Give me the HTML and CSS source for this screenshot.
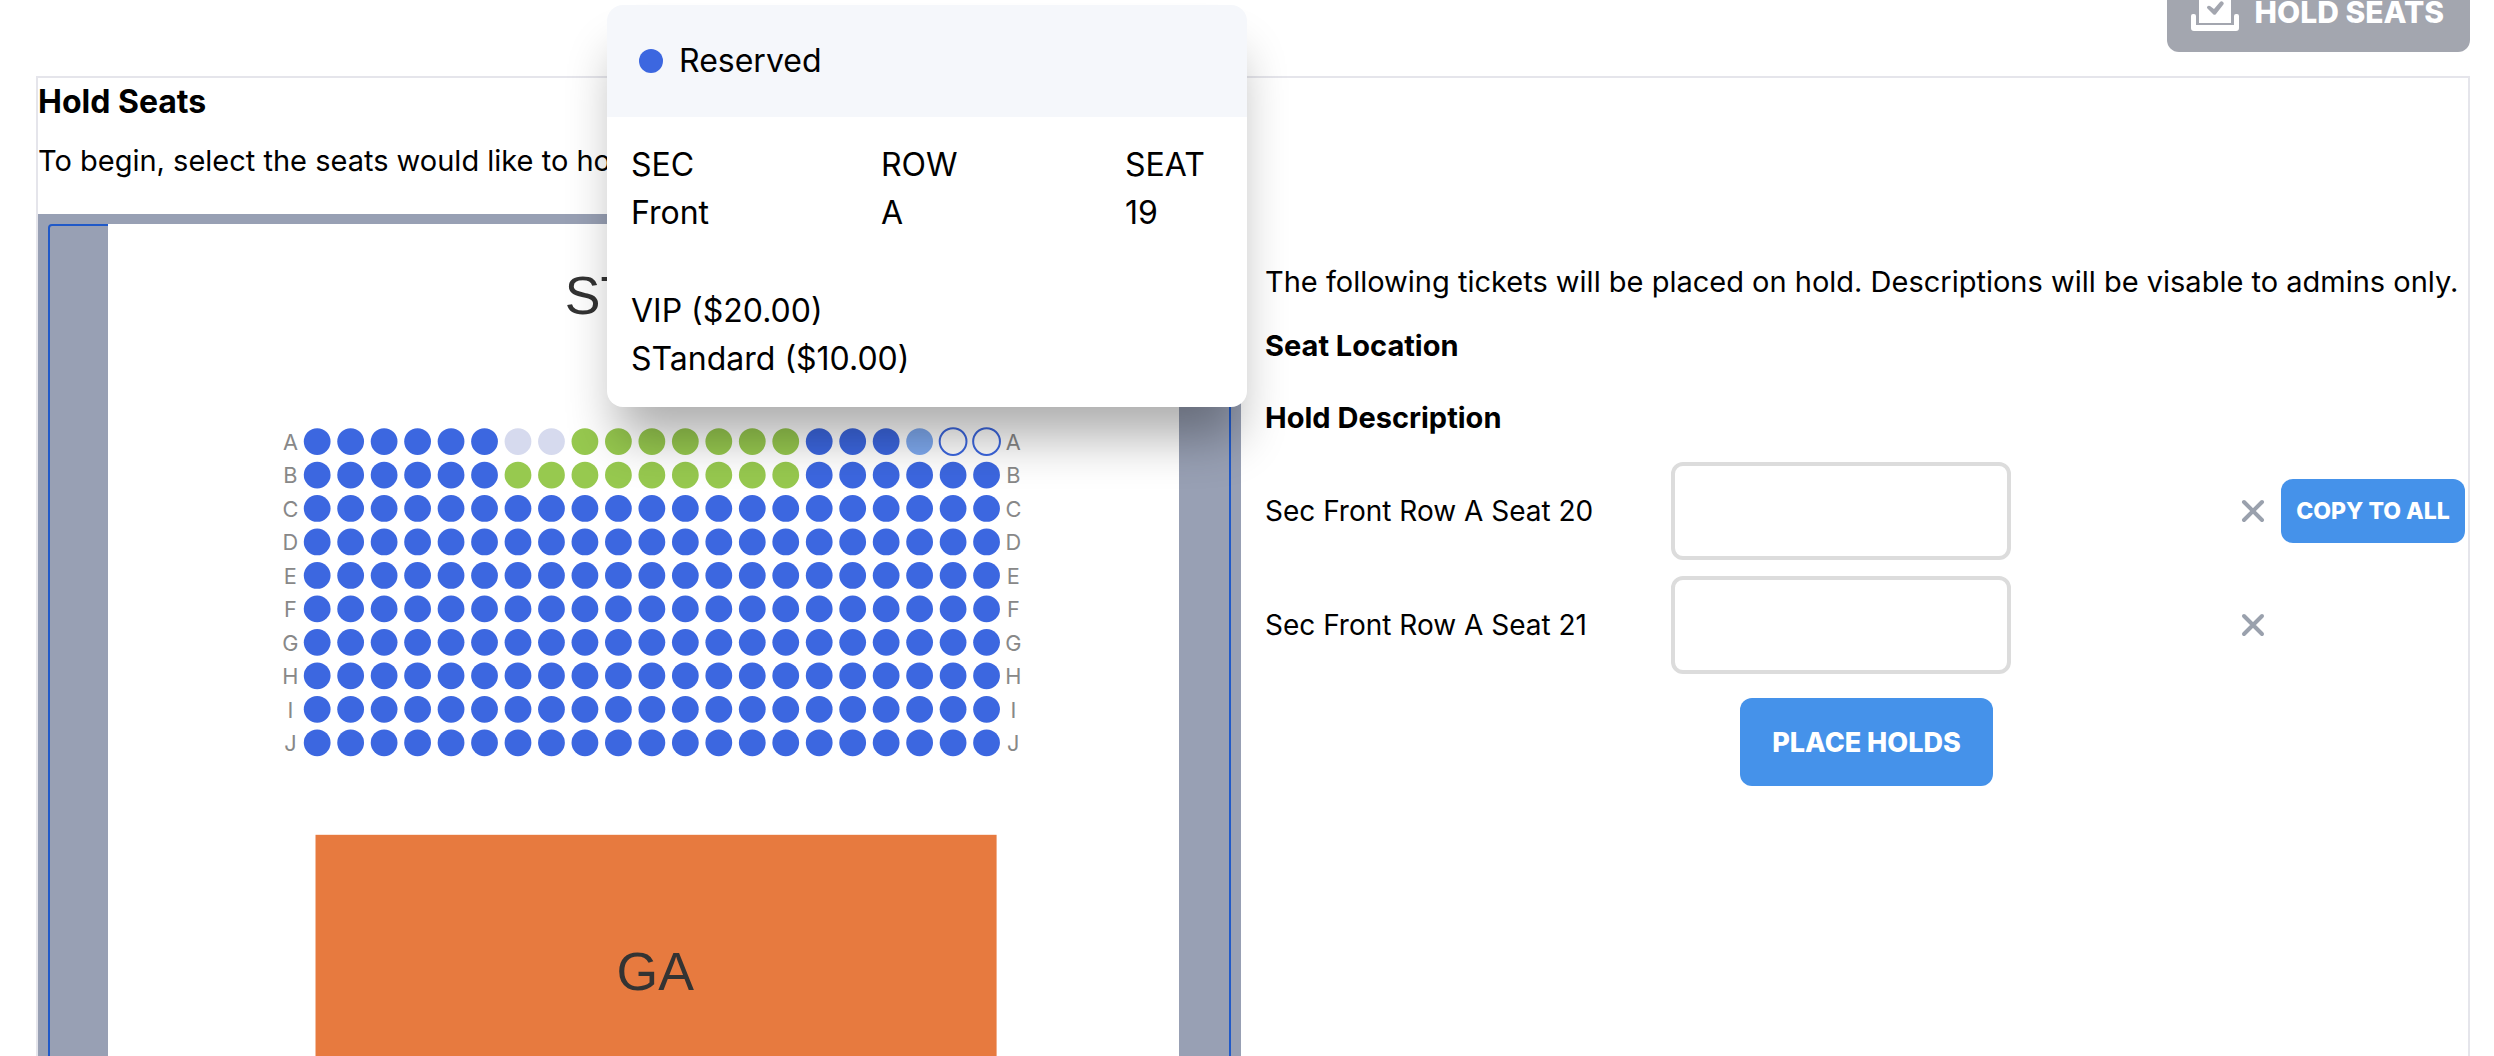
FILE: index.html
```html
<!DOCTYPE html>
<html lang="en">
    <head>
        <meta charset="utf-8">
        <title>Hold Seats</title>
        <link rel="stylesheet" href="styles.css">
    </head>
    <body>
        <div class="toolbar">
            <button type="button" class="btn btn-hold">
                <svg class="ballot-icon" viewBox="0 0 48 38" aria-hidden="true">
                    <path fill="currentColor" fill-rule="evenodd" d="M10 0h28a2 2 0 0 1 2 2v28H8V2a2 2 0 0 1 2-2zM16 15l6 6a2 2 0 0 0 3 0l7-9a2 2 0 0 0-3-3l-6 7-4-3a2 2 0 0 0-3 2z"/>
                    <path fill="currentColor" d="M2 21h1a2 2 0 0 1 2 2v9h38v-9a2 2 0 0 1 2-2h1a2 2 0 0 1 2 2v12a3 3 0 0 1-3 3H3a3 3 0 0 1-3-3V23a2 2 0 0 1 2-2z"/>
                </svg>
                HOLD SEATS
            </button>
        </div>

        <div class="panel">
            <h2 class="title">Hold Seats</h2>
            <p class="intro">To begin, select the seats would like to hold.</p>

            <div class="columns">
                <div class="map-frame">
                    <div class="map-outline">
                        <svg class="seat-map" viewBox="0 0 640 600">
                            <rect class="floor" width="640" height="600"/>
                            <text class="area-name" x="326" y="54">STAGE</text>
                            <g id="seats"></g>
                            <rect class="ga" x="124" y="365" width="407" height="200"/>
                            <text class="area-name" x="327" y="458">GA</text>
                        </svg>
                    </div>
                </div>

                <form class="holds">
                    <p class="note">The following tickets will be placed on hold. Descriptions will be visable to admins only.</p>
                    <h3 class="heading">Seat Location</h3>
                    <h3 class="heading heading-last">Hold Description</h3>

                    <div class="hold-row">
                        <label for="seat-20">Sec Front Row A Seat 20</label>
                        <input type="text" class="hold-input" id="seat-20">
                        <div class="actions">
                            <button type="button" class="remove" aria-label="Remove seat 20">
                                <svg viewBox="0 0 24 24"><path d="M3 3l18 18M21 3L3 21"/></svg>
                            </button>
                            <button type="button" class="btn btn-copy">COPY TO ALL</button>
                        </div>
                    </div>
                    <div class="hold-row">
                        <label for="seat-21">Sec Front Row A Seat 21</label>
                        <input type="text" class="hold-input" id="seat-21">
                        <div class="actions">
                            <button type="button" class="remove" aria-label="Remove seat 21">
                                <svg viewBox="0 0 24 24"><path d="M3 3l18 18M21 3L3 21"/></svg>
                            </button>
                        </div>
                    </div>

                    <button type="button" class="btn btn-place">PLACE HOLDS</button>
                </form>
            </div>
        </div>

        <div class="tooltip" role="tooltip">
            <div class="tooltip-header"><span class="dot"></span>Reserved</div>
            <div class="tooltip-body">
                <table class="seat-info">
                    <tr><th>SEC</th><th>ROW</th><th>SEAT</th></tr>
                    <tr><td>Front</td><td>A</td><td>19</td></tr>
                </table>
                <div>VIP ($20.00)</div>
                <div>STandard ($10.00)</div>
            </div>
        </div>

        <script>
            // r = reserved, u = unavailable, g = vip, h = hovered, s = selected
            const full = "r".repeat(21);
            const rows = {
                A: "rrrrrruugggggggrrrhss",
                B: "rrrrrrgggggggggrrrrrr",
                C: full, D: full, E: full, F: full,
                G: full, H: full, I: full, J: full
            };

            let svg = "";
            Object.keys(rows).forEach((name, i) => {
                const y = 130 + i * 20;
                svg += `<text class="row-name" x="109" y="${y + 5}">${name}</text>`;
                rows[name].split("").forEach((type, j) => {
                    svg += `<circle class="seat ${type}" cx="${125 + j * 20}" cy="${y}" r="8"/>`;
                });
                svg += `<text class="row-name" x="541" y="${y + 5}">${name}</text>`;
            });
            document.getElementById("seats").innerHTML = svg;
        </script>
    </body>
</html>
```
FILE: styles.css
```css
* {
    box-sizing: border-box;
}

body {
    margin: 0;
    padding: 0 24px 0 36px;
    height: 100vh;
    overflow: hidden;
    font-family: Inter, "Open Sans", sans-serif;
    font-size: 28px;
    line-height: 42px;
    color: black;
    background-color: white;
}

h2, h3, p {
    margin: 0;
}

/* the bar is partly scrolled out of view */
.toolbar {
    display: flex;
    justify-content: flex-end;
    margin-top: -28px;
    margin-bottom: 24px;
}

.btn {
    border: none;
    border-radius: 12px;
    color: white;
    background-color: #4592ea;
    font-family: inherit;
    font-weight: 800;
    cursor: pointer;
}

.btn-hold {
    display: flex;
    align-items: center;
    gap: 16px;
    height: 80px;
    padding: 0 26px 0 24px;
    font-size: 30px;
    background-color: #a3a6af;
}

.ballot-icon {
    width: 48px;
}

.panel {
    border: 2px solid #e5e5eb;
}

.title {
    font-size: 32px;
    line-height: 48px;
}

.intro {
    margin-top: 14px;
    margin-bottom: 32px;
    font-size: 29px;
}

.columns {
    display: grid;
    grid-template-columns: minmax(0, 1fr) minmax(0, 1fr);
    gap: 24px;
}

.map-frame {
    padding: 10px;
    background-color: #98a0b4;
}

.map-outline {
    padding: 0 50px 0 58px;
    border: 2px solid #2059c8;
    border-radius: 4px;
}

.seat-map {
    display: block;
    width: 100%;
    margin-top: -2px;
}

.floor {
    fill: white;
}

.ga {
    fill: #e77a3f;
}

.area-name {
    font-family: "Liberation Sans", Arial, sans-serif;
    font-size: 32px;
    text-anchor: middle;
    fill: #333;
}

.row-name {
    font-size: 13px;
    text-anchor: middle;
    fill: #888;
}

.r { fill: #3c67e0; }
.u { fill: #d6daee; }
.g { fill: #97c94f; }
.h { fill: #7faaf0; }

.s {
    fill: none;
    stroke: #3c67e0;
    stroke-width: 2px;
    vector-effect: non-scaling-stroke;
}

.holds {
    display: flex;
    flex-direction: column;
    padding-top: 47px;
}

.note {
    font-size: 29px;
    white-space: nowrap;
}

.heading {
    margin-top: 22px;
    font-size: 29px;
}

.heading-last {
    margin-top: 30px;
    margin-bottom: 23px;
}

.hold-row {
    display: grid;
    grid-template-columns: 406px 340px 1fr;
    align-items: center;
    margin-bottom: 16px;
}

.hold-input {
    height: 98px;
    padding: 0 16px;
    border: 4px solid #dcdcdc;
    border-radius: 12px;
    font: inherit;
}

.actions {
    display: grid;
    grid-template-columns: 24px 184px;
    justify-content: end;
    align-items: center;
    gap: 16px;
    padding-right: 3px;
}

.remove {
    display: flex;
    padding: 0;
    border: none;
    background: none;
    cursor: pointer;
}

.remove svg {
    width: 24px;
    stroke: #9aa1ad;
    stroke-width: 4px;
    stroke-linecap: round;
}

.btn-copy {
    height: 64px;
    padding: 0;
    font-size: 23px;
}

.btn-place {
    align-self: center;
    height: 88px;
    margin-top: 8px;
    padding: 0 32px;
    font-size: 27px;
}

.tooltip {
    position: absolute;
    top: 5px;
    left: 607px;
    width: 640px;
    border-radius: 16px;
    overflow: hidden;
    font-size: 32px;
    line-height: 48px;
    background-color: white;
    box-shadow: 0 40px 50px -10px rgba(0, 0, 0, 0.32);
}

.tooltip-header {
    display: flex;
    align-items: center;
    gap: 16px;
    height: 112px;
    padding: 0 32px;
    background-color: #f5f7fb;
}

.dot {
    width: 24px;
    height: 24px;
    border-radius: 50%;
    background-color: #3c67e0;
}

.tooltip-body {
    padding: 24px;
}

.seat-info {
    width: 100%;
    margin-bottom: 50px;
    border-collapse: collapse;
    table-layout: fixed;
}

.seat-info th, .seat-info td {
    padding: 0;
    text-align: left;
    font-weight: normal;
}

.seat-info th:nth-child(1) {
    width: 250px;
}

.seat-info th:nth-child(2) {
    width: 244px;
}
```
